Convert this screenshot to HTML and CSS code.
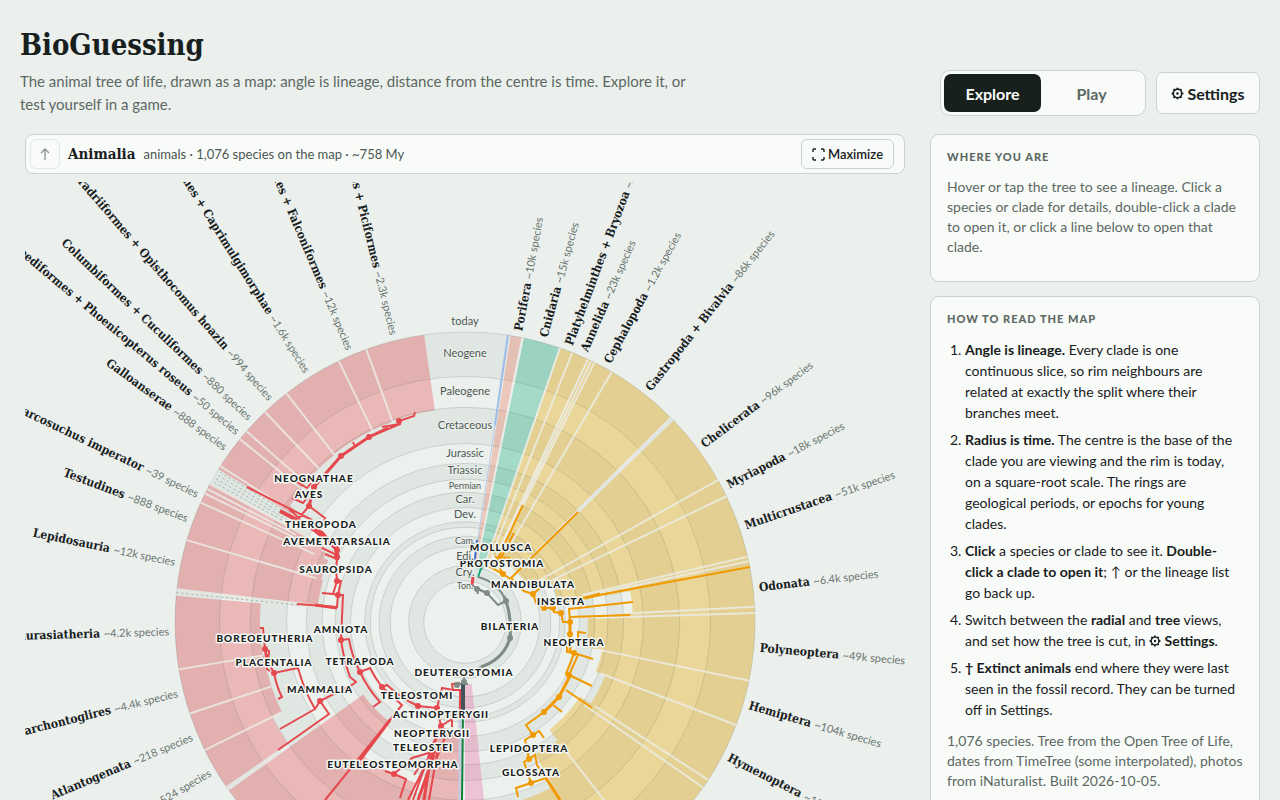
FILE: index.html
```html
<!DOCTYPE html>
<html lang="en">
<head>
<meta charset="utf-8">
<meta name="viewport" content="width=device-width, initial-scale=1">
<title>BioGuessing</title>
<link rel="stylesheet" href="styles.css">
</head>
<body>
<svg class="defs" aria-hidden="true">
  <symbol id="gear" viewBox="0 0 16 16">
    <g fill="none" stroke="currentColor" stroke-width="1.9" stroke-linejoin="round">
      <circle cx="8" cy="8" r="5.2"/>
      <path stroke-width="2.4" d="M8 .8v2M8 13.200v2M.8 8h2M13.200 8h2M3.200 2.600l1.200 1.400M12.800 2.600l-1.200 1.400M3.200 13.400l1.200-1.400M12.800 13.400l-1.200-1.400"/>
    </g>
    <circle cx="8" cy="8" r="1.6" fill="currentColor"/>
  </symbol>
</svg>

<header class="page-header">
  <div class="intro">
    <h1>BioGuessing</h1>
    <p class="tagline">The animal tree of life, drawn as a map: angle is lineage, distance from the centre is time. Explore it, or test yourself in a game.</p>
  </div>
  <div class="controls">
    <div class="segmented">
      <button class="segment segment-on" type="button">Explore</button>
      <button class="segment" type="button">Play</button>
    </div>
    <button class="settings" type="button"><svg class="gear"><use href="#gear"/></svg>Settings</button>
  </div>
</header>

<div class="columns">
  <main class="map-column">
    <div class="toolbar">
      <button class="up" type="button" aria-label="Up one level" disabled>
        <svg width="12" height="14" viewBox="0 0 12 14" fill="none" stroke="currentColor" stroke-width="1.3"><path d="M6 13V2M2 6l4-4 4 4"/></svg>
      </button>
      <strong class="clade-name">Animalia</strong>
      <span class="clade-info">animals · 1,076 species on the map · ~758 My</span>
      <button class="maximize" type="button"><svg width="13" height="13" viewBox="0 0 13 13" fill="none" stroke="currentColor" stroke-width="1.4"><path d="M1 4V2q0-1 1-1h2M9 1h2q1 0 1 1v2M12 9v2q0 1-1 1H9M4 12H2q-1 0-1-1V9"/></svg>Maximize</button>
    </div>
    <svg id="map" class="map" viewBox="25 182 880 880" role="img" aria-label="Radial tree of life"></svg>
  </main>

  <aside class="sidebar">
    <section class="card">
      <h2>Where you are</h2>
      <p class="hint">Hover or tap the tree to see a lineage. Click a species or clade for details, double-click a clade to open it, or click a line below to open that clade.</p>
    </section>
    <section class="card">
      <h2>How to read the map</h2>
      <ol>
        <li><b>Angle is lineage.</b> Every clade is one continuous slice, so rim neighbours are related at exactly the split where their branches meet.</li>
        <li><b>Radius is time.</b> The centre is the base of the clade you are viewing and the rim is today, on a square-root scale. The rings are geological periods, or epochs for young clades.</li>
        <li><b>Click</b> a species or clade to see it. <b>Double-click a clade to open it</b>; ↑ or the lineage list go back up.</li>
        <li>Switch between the <b>radial</b> and <b>tree</b> views, and set how the tree is cut, in <b><svg class="gear gear-small"><use href="#gear"/></svg> Settings</b>.</li>
        <li><b>† Extinct animals</b> end where they were last seen in the fossil record. They can be turned off in Settings.</li>
      </ol>
      <p class="source">1,076 species. Tree from the Open Tree of Life, dates from TimeTree (some interpolated), photos from iNaturalist. Built 2026-10-05.</p>
    </section>
  </aside>
</div>
<script src="map.js"></script>
</body>
</html>
```
FILE: styles.css
```css
* { box-sizing: border-box; }

body {
  margin: 0;
  padding: 25px 20px;
  background: #ebf0ed;
  color: #18201d;
  font-family: "Lato", sans-serif;
  font-size: 14px;
}

html { scrollbar-width: none; }

.defs { position: absolute; width: 0; height: 0; }

button { font: inherit; color: inherit; cursor: pointer; }

.page-header {
  display: flex;
  align-items: flex-end;
  justify-content: space-between;
  gap: 20px;
  margin-bottom: 18px;
}

h1 {
  margin: 0 0 4px;
  font-family: "DejaVu Serif Condensed", "DejaVu Serif", serif;
  font-size: 29px;
  line-height: 41px;
}

.tagline {
  margin: 0;
  max-width: 690px;
  color: #5c6863;
  font-size: 15px;
  line-height: 23px;
}

.controls { display: flex; align-items: center; gap: 10px; }

.segmented {
  display: flex;
  padding: 3px;
  border: 1px solid #cbd3ce;
  border-radius: 10px;
  background: #f8fbf8;
}

.segment {
  width: 97px;
  height: 38px;
  padding: 0;
  border: 0;
  border-radius: 7px;
  background: transparent;
  color: #5c6863;
  font-size: 16px;
  font-weight: 700;
}

.segment + .segment { width: 101px; }

.segment-on { background: #18201d; color: #f8fbf8; }

.settings {
  display: flex;
  align-items: center;
  justify-content: center;
  gap: 3px;
  width: 104px;
  height: 42px;
  padding: 0;
  border: 1px solid #cbd3ce;
  border-radius: 7px;
  background: #f8fbf8;
  font-size: 16px;
  font-weight: 700;
}

.gear { width: 13px; height: 13px; }
.gear-small { width: 12px; height: 12px; vertical-align: -1px; }

.columns {
  display: grid;
  grid-template-columns: minmax(0, 1fr) 330px;
  gap: 20px;
  align-items: start;
}

.map-column {
  display: flex;
  flex-direction: column;
  gap: 8px;
  padding: 0 5px;
}

.toolbar {
  display: flex;
  align-items: center;
  gap: 8px;
  height: 40px;
  padding: 0 10px 0 4px;
  border: 1px solid #cbd3ce;
  border-radius: 8px;
  background: #f8fbf8;
}

.up {
  display: grid;
  place-items: center;
  width: 30px;
  height: 30px;
  padding: 0;
  border: 1px solid #e3e8e5;
  border-radius: 6px;
  background: transparent;
  color: #8b928f;
}

.clade-name {
  font-family: "DejaVu Serif Condensed", "DejaVu Serif", serif;
  font-size: 15px;
}

.clade-info { color: #4c5752; font-size: 13px; }

.maximize {
  display: flex;
  align-items: center;
  justify-content: center;
  gap: 3px;
  width: 93px;
  height: 30px;
  margin-left: auto;
  padding: 0;
  border: 1px solid #cbd3ce;
  border-radius: 6px;
  background: #f8fbf8;
  font-size: 13px;
  font-weight: 600;
}

.map { display: block; width: 100%; }

.sidebar { display: grid; gap: 14px; }

.card {
  padding: 15px 16px 16px;
  border: 1px solid #cbd3ce;
  border-radius: 9px;
  background: #f8fbf8;
}

.card h2 {
  margin: 0 0 13px;
  color: #5c6863;
  font-size: 11px;
  font-weight: 900;
  line-height: 14px;
  letter-spacing: 1px;
  text-transform: uppercase;
}

.hint, .source {
  margin: 0;
  color: #5c6863;
  font-size: 14px;
  line-height: 20px;
}

.hint { padding-bottom: 8px; }

.card ol { margin: 0 0 11px; padding-left: 18px; }
.card li { margin-bottom: 6px; font-size: 14px; line-height: 21px; }

.period { fill: #4c5752; font-size: 11px; text-anchor: middle; paint-order: stroke; stroke: #edf1ee; stroke-width: 2px; }
.period-small { font-size: 9px; }
.tip { fill: #18201d; font: bold 12px "DejaVu Serif Condensed", "DejaVu Serif", serif; }
.tip-count { fill: #6a7570; font: 11px "Lato", sans-serif; }
.clade {
  fill: #18201d;
  font-size: 10px;
  font-weight: 900;
  letter-spacing: 1px;
  text-anchor: middle;
  paint-order: stroke;
  stroke: #f4f7f4;
  stroke-width: 3px;
  stroke-linejoin: round;
}
```
FILE: map.js
```js
const map = document.getElementById('map');
const CX = 465, CY = 622, RIM = 290, SCALE = 9.27;
const NS = 'http://www.w3.org/2000/svg';

function add(name, attrs, parent = map) {
  const el = document.createElementNS(NS, name);
  for (const key in attrs) el.setAttribute(key, attrs[key]);
  parent.appendChild(el);
  return el;
}

// Angles are in degrees, clockwise from the top.
function at(deg, r) {
  const a = deg * Math.PI / 180;
  return [CX + r * Math.sin(a), CY - r * Math.cos(a)];
}

const radius = age => RIM - SCALE * Math.sqrt(age);

// Geological periods: alternating discs from the rim inwards
const starts = [0, 23, 66, 145, 201, 252, 299, 359, 419, 444, 485, 539, 635, 720];
starts.forEach((age, i) => {
  add('circle', { cx: CX, cy: CY, r: radius(age), fill: i % 2 ? '#ecf1ee' : '#e0e6e2' });
});

const RED = '#e5484d', GOLD = '#e8b022';
const wedges = [
  [9.1, 11.2, 55, '#ee7558'], [11.7, 19, 54, '#1aad7d'],
  [19.2, 21.7, 68, GOLD], [21.7, 25, 72, GOLD], [25.2, 26.4, 75, GOLD], [26.4, 30.4, 75, GOLD],
  [30.4, 45, 72, GOLD], [46, 60.7, 72, GOLD], [60.7, 64.3, 80, GOLD], [64.3, 77, 95, GOLD],
  [77, 79.4, 110, GOLD], [79.4, 87, 168, GOLD], [87, 88.2, 150, GOLD], [88.2, 101.7, 123, GOLD],
  [101.7, 110.8, 140, GOLD], [110.8, 123, 150, GOLD], [123, 124.8, 137, GOLD],
  [124.8, 142, 137, GOLD], [142, 152, 150, GOLD], [152, 173, 187, GOLD],
  [173.9, 180, 62, '#ec6aa4'],
  [182, 194, 108, RED], [197, 218, 168, RED], [218, 234.5, 125, RED],
  [235.5, 243.8, 215, RED], [243.8, 251.6, 204, RED], [251.6, 260.6, 204, RED], [260.6, 275.2, 205, RED],
  [276.7, 286.4, 148, RED], [286.4, 294.3, 150, RED], [294.3, 296.3, 155, RED], [296.3, 298.5, 160, RED],
  [301.5, 303.5, 205, RED], [303.5, 309.1, 210, RED], [309.1, 311.1, 212, RED],
  [311.1, 316.4, 212, RED], [316.4, 322, 212, RED], [322, 334.2, 213, RED],
  [334.2, 340.1, 213, RED], [340.1, 351.9, 214, RED]
];
wedges.forEach(([a, b, r, fill]) => {
  const [x1, y1] = at(a, r), [x2, y2] = at(a, RIM), [x3, y3] = at(b, RIM), [x4, y4] = at(b, r);
  add('path', {
    d: `M${x1} ${y1}L${x2} ${y2}A${RIM} ${RIM} 0 0 1 ${x3} ${y3}L${x4} ${y4}A${r} ${r} 0 0 0 ${x1} ${y1}Z`,
    fill, 'fill-opacity': fill === GOLD ? 0.42 : 0.34
  });
});

starts.forEach(age => {
  add('circle', { cx: CX, cy: CY, r: radius(age), fill: 'none', stroke: '#5c6863', 'stroke-opacity': 0.2 });
});

// Gaps between neighbouring clades
const gaps = [
  [11.5, 55], [19.1, 60], [21.7, 72], [25.1, 75], [25.8, 75], [26.5, 75], [30.4, 80], [45.5, 158, 4], [60.7, 85], [64.3, 95],
  [77, 120], [77.9, 120], [87, 168], [88.2, 130], [101.7, 135], [110.8, 145], [123, 155], [124.8, 145], [142, 155], [152, 170],
  [235, 225, 4], [243.8, 204], [251.6, 204], [260.6, 205], [276, 150, 4], [286.4, 155], [294.3, 165], [296.3, 170], [297.3, 190],
  [298.4, 175], [302.5, 215], [309.1, 212], [311.1, 212], [316.4, 212], [322, 212], [334.2, 212], [340.1, 212]
];
gaps.forEach(([deg, r, width = 2]) => {
  const [x1, y1] = at(deg, r), [x2, y2] = at(deg, RIM);
  add('line', { x1, y1, x2, y2, stroke: width > 2 ? '#e4e6e0' : '#eceee8', 'stroke-width': width, 'stroke-opacity': 0.8 });
});

// Extinct lineages: dotted from last record to the rim
for (let deg = 299; deg < 302; deg += 0.5) {
  const [x1, y1] = at(deg, 180), [x2, y2] = at(deg, RIM);
  add('line', { x1, y1, x2, y2, stroke: '#dfe6e2', 'stroke-width': 3 });
}
for (const [deg, r] of [[299.1, 200], [299.9, 200], [300.7, 200], [301.5, 200], [275.8, 168]]) {
  const [x1, y1] = at(deg, r), [x2, y2] = at(deg, RIM);
  add('line', { x1, y1, x2, y2, stroke: '#9db0a9', 'stroke-width': 1, 'stroke-dasharray': '2 3' });
}

// Branches: colour, width, path
const branches = [
  ['#9dbde8', 2, 'M508 335L495 425'], ['#b9c9e6', 1, 'M495 425L477 545'],
  ['#3b6fd0', 2, 'M477 540L474 567'], ['#e5484d', 3, 'M473 577L472 585'], ['#18a878', 2, 'M484 560L478 577'],
  ['#7f8b87', 2, 'M478 577Q498 582 506 601L498 605L487 593L476 588M472 585Q477 588 478 594'],
  ['#7f8b87', 3, 'M504 596Q512 615 510 638Q504 659 481 667'],
  ['#7f8b87', 2, 'M481 667L464 675V685M452 684H468M477 589L487 593'],
  ['#c9cbe0', 3, 'M460 700V800'], ['#42525a', 4, 'M463 684V712'], ['#14803c', 2, 'M463 710L462 800'],
  ['#e5484d', 2, 'M382 427L400 424L399 421L414 416L415 412M400 424L369 437M353 442L355 447'],
  ['#e5484d', 3, 'M388 428L369 437L341 456L314 487L309 506'],
  ['#e5484d', 2, 'M297 482L307 488L311 483M292 498L303 503L307 498M309 506L325 518L323 523M309 506L299 518L289 509M247 487L312 520'],
  ['#e5484d', 4, 'M280 511L322 533L337 550V560M310 523L330 542M321 532L324 536'],
  ['#e5484d', 2, 'M305 524L336 548M322 548L337 555M325 554L337 559M337 560L336 570L337 581H341L338 595L333 594L322 593M337 581L333 594M338 595H343L341 640M338 595L337 607L297 604'],
  ['#e5484d', 3, 'M315 605L337 608M337 545V560'],
  ['#e5484d', 2, 'M341 640L349 639Q352 657 360 672L370 668Q375 678 382 687L387 685Q402 699 418 706L437 708L442 688L453 690L452 684L460 683M341 640Q344 661 350 677L356 682L352 685L320 701M360 672Q368 689 380 702L373 707M382 687L402 705L325 800'],
  ['#e5484d', 2, 'M260 628H263L265 649L269 651L268 665M265 649Q268 663 274 673L298 668Q304 690 315 709L280 729M274 673Q277 688 282 697L278 699M315 709L320 701L329 714L278 750M265 649L267 669L270 671'],
  ['#e5484d', 3, 'M441 726L432 748L424 800M390 720L360 760M434 755L418 800'],
  ['#e5484d', 2, 'M437 708L441 726L460 714V690L453 690M452 718V727M385 771L394 774L406 779L400 798M394 774L412 758L432 752M430 752L413 800M421 764L414 775M428 760L408 800M438 748L429 800M446 735L436 760'],
  ['#f09a00', 2, 'M523 505L497 560M514 533L500 560L490 567L503 574L512 580M578 512L511 578L517 584M503 574L498 565M508 547L500 558M495 557L510 558M512 580L524 591L533 594L540 588M533 594L536 603L544 608H553L554 612L561 613L563 622H570'],
  ['#f09a00', 3, 'M585 598L600 594M570 622V652'],
  ['#f09a00', 2, 'M561 602L750 567M570 622L569 609L633 602M569 617L630 615M570 652L574 653L593 659M578 643V632L586 633M567 642V652L574 653M574 653L566 674L569 675M578 655L569 675L592 686M566 690L592 708M553 705L562 712M544 712L526 725L533 735L539 731L544 738M533 735L525 740L529 759L535 755L537 765L560 800M529 759L524 762L531 783L516 788L518 797M531 783L546 778'],
  ['#f09a00', 3, 'M571 674L559 697L544 712M546 778L560 800']
];
branches.forEach(([stroke, width, d]) => add('path', { d, stroke, 'stroke-width': width, fill: 'none' }));

const nodes = {
  '#e5484d': [[399, 421], [369, 437], [341, 456], [314, 487], [309, 506], [337, 550], [337, 557], [337, 581], [338, 595], [341, 640], [360, 672], [382, 687], [418, 706], [437, 708], [441, 726], [265, 649], [274, 673], [320, 701], [394, 774], [433, 752]],
  '#f09a00': [[503, 574], [533, 594], [544, 608], [553, 608], [561, 613], [570, 622], [570, 634], [574, 653], [569, 675], [559, 697], [544, 712], [533, 735], [529, 759], [531, 783]],
  '#7f8b87': [[477, 589], [487, 593], [506, 601], [510, 638], [464, 682], [457, 685]]
};
for (const fill in nodes) nodes[fill].forEach(([cx, cy]) => add('circle', { cx, cy, r: 3, fill }));

function label(text, x, y, cls) {
  add('text', { x, y: y + 4, class: cls }).textContent = text;
}
[['Neognathae', 314, 478], ['Aves', 309, 494], ['Theropoda', 321, 524], ['Avemetatarsalia', 337, 541],
 ['Sauropsida', 336, 569], ['Amniota', 341, 629], ['Boreoeutheria', 265, 638], ['Placentalia', 274, 662],
 ['Tetrapoda', 360, 661], ['Mammalia', 320, 689], ['Deuterostomia', 464, 672], ['Teleostomi', 417, 695],
 ['Actinopterygii', 441, 714], ['Neopterygii', 432, 733], ['Teleostei', 423, 747], ['Euteleosteomorpha', 393, 764],
 ['Mollusca', 501, 547], ['Protostomia', 502, 563], ['Mandibulata', 533, 584], ['Insecta', 561, 601],
 ['Bilateria', 510, 626], ['Neoptera', 574, 642], ['Lepidoptera', 529, 748], ['Glossata', 531, 772]]
  .forEach(([t, x, y]) => label(t.toUpperCase(), x, y, 'clade'));

[['today', 321], ['Neogene', 353], ['Paleogene', 391], ['Cretaceous', 425], ['Jurassic', 453], ['Triassic', 470],
 ['Car.', 499], ['Dev.', 514], ['Edi.', 556], ['Cry.', 572]].forEach(([t, y]) => label(t, 465, y, 'period'));
[['Permian', 485], ['Cam.', 540], ['Ton.', 585]].forEach(([t, y]) => label(t, 465, y, 'period period-small'));

// Rim labels: angle, name, species count
[[10.4, 'Porifera', '10k'], [15.4, 'Cnidaria', '15k'], [20.5, 'Platyhelminthes + Bryozoa', '34k'], [23.7, 'Annelida', '23k'],
 [28.7, 'Cephalopoda', '1.2k'], [38.2, 'Gastropoda + Bivalvia', '86k'], [53.3, 'Chelicerata', '96k'], [62.5, 'Myriapoda', '18k'],
 [71, 'Multicrustacea', '51k'], [83.3, 'Odonata', '6.4k'], [95, 'Polyneoptera', '49k'], [106.3, 'Hemiptera', '104k'],
 [117.1, 'Hymenoptera', '154k'],
 [239.5, 'Marsupialia + Monotremata', '524'], [247.2, 'Atlantogenata', '218'], [256.1, 'Euarchontoglires', '4.4k'],
 [268.2, 'Laurasiatheria', '4.2k'], [281.7, 'Lepidosauria', '12k'], [290.5, 'Testudines', '888'],
 [295.6, 'Sarcosuchus imperator', '39'], [306.1, 'Galloanserae', '888'],
 [309.9, 'Podicipediformes + Phoenicopterus roseus', '50'], [313.5, 'Columbiformes + Cuculiformes', '880'],
 [319, 'Charadriiformes + Opisthocomus hoazin', '994'], [327.8, 'Otidiformes + Caprimulgimorphae', '1.6k'],
 [337.1, 'Passeriformes + Falconiformes', '12k'], [346.1, 'Coraciiformes + Piciformes', '2.3k']
].forEach(([deg, name, count]) => {
  const left = deg > 180;
  const [x, y] = at(deg, 296);
  const text = add('text', {
    class: 'tip', dy: 4, 'text-anchor': left ? 'end' : 'start',
    transform: `translate(${x} ${y}) rotate(${left ? deg - 270 : deg - 90})`
  });
  text.append(name + ' ');
  add('tspan', { class: 'tip-count' }, text).textContent = `~${count} species`;
});
```
